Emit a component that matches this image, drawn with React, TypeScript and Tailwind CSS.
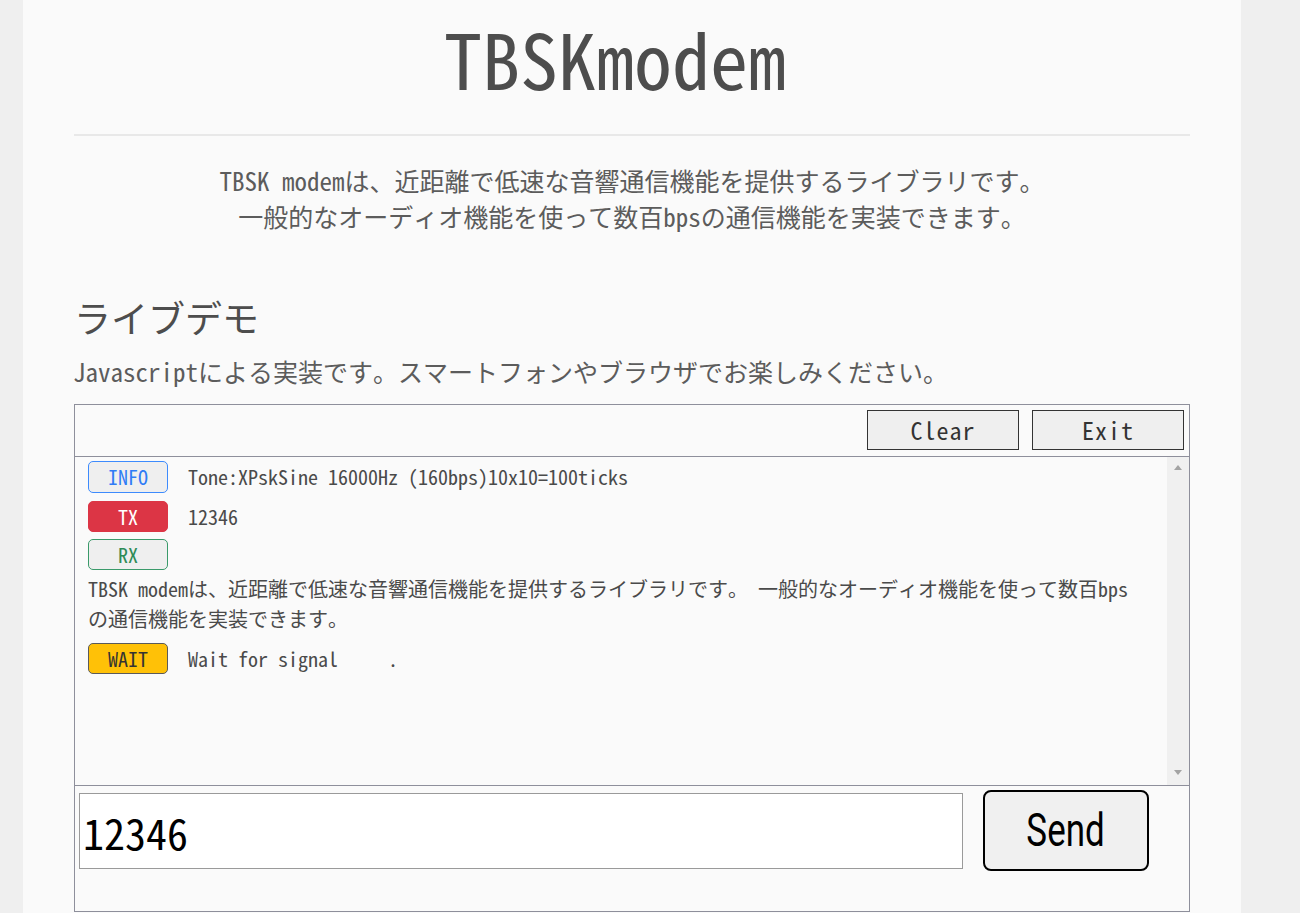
const mono = "font-['Noto_Sans_Mono_CJK_JP','Noto_Sans_CJK_JP',monospace]";

type BadgeKind = "info" | "tx" | "rx" | "wait";

const badgeStyles: Record<BadgeKind, string> = {
  info: "bg-[#efefef] border-[1.5px] border-[#3d8bfd] text-[#2f7cf6]",
  tx: "bg-[#dc3545] border-[1.5px] border-[#dc3545] text-white",
  rx: "bg-[#efefef] border-[1.5px] border-[#3a9a6a] text-[#2e8b57]",
  wait: "bg-[#ffc107] border-[1.5px] border-[#5a5a5a] text-[#333]",
};

function Badge({ kind, label }: { kind: BadgeKind; label: string }) {
  return (
    <span
      className={`flex h-full w-[80px] shrink-0 items-center justify-center rounded-[5px] text-[20px] leading-none ${badgeStyles[kind]}`}
    >
      {label}
    </span>
  );
}

function LogRow({ kind, label, text, className }: { kind: BadgeKind; label: string; text?: string; className: string }) {
  return (
    <div className={`flex items-center gap-[20px] ${className}`}>
      <Badge kind={kind} label={label} />
      {text && <span className="whitespace-pre">{text}</span>}
    </div>
  );
}

export default function App() {
  return (
    <div className={`h-[913px] overflow-hidden bg-[#efefef] text-[#5c5c5c] ${mono}`}>
      <main className="ml-[23px] min-h-full w-[1218px] bg-[#fafafa] px-[51px]">
        {/* Title */}
        <header className="border-b-2 border-[#e8e8e8] pb-[39px] pr-[34px] pt-[19px] text-center">
          <h1 className="text-[76px] leading-[76px] text-[#4d4d4d]">TBSKmodem</h1>
        </header>

        <p className="mt-[26px] text-center text-[25px] leading-[36px]">
          TBSK modemは、近距離で低速な音響通信機能を提供するライブラリです。
          <br />
          一般的なオーディオ機能を使って数百bpsの通信機能を実装できます。
        </p>

        <h2 className="mt-[59px] text-[37px] leading-[48px] text-[#4d4d4d]">ライブデモ</h2>
        <p className="-ml-[1px] mt-[12px] text-[25px] leading-[36px]">
          Javascriptによる実装です。スマートフォンやブラウザでお楽しみください。
        </p>

        {/* Demo panel */}
        <section className="mt-[15px] flex flex-col border border-[#8e8f9b]">
          <div className="flex h-[52px] items-start justify-end gap-[13px] border-b border-[#8e8f9b] pr-[5px] pt-[5px]">
            <button className="h-[40px] w-[152px] border border-[#333] bg-[#efefef] text-[24px] leading-none tracking-[1px] text-[#333]">
              Clear
            </button>
            <button className="h-[40px] w-[152px] border border-[#333] bg-[#efefef] text-[24px] leading-none tracking-[1px] text-[#333]">
              Exit
            </button>
          </div>

          {/* Log */}
          <div className="flex h-[329px] border-b border-[#8e8f9b]">
            <div className="flex-1 pl-[13px] pr-[22px] pt-[4px] text-[20px] text-[#4a4a4a]">
              <LogRow kind="info" label="INFO" text="Tone:XPskSine 16000Hz (160bps)10x10=100ticks" className="mb-[8px] h-[32px]" />
              <LogRow kind="tx" label="TX" text="12346" className="mb-[7px] h-[31px]" />
              <LogRow kind="rx" label="RX" className="mb-[4px] h-[31px]" />
              <p className="mb-[9px] leading-[30px]">
                TBSK modemは、近距離で低速な音響通信機能を提供するライブラリです。 一般的なオーディオ機能を使って数百bpsの通信機能を実装できます。
              </p>
              <LogRow kind="wait" label="WAIT" text="Wait for signal     ." className="h-[31px]" />
            </div>
            <div className="flex w-[22px] flex-col items-center justify-between bg-[#f0f0f0] pb-[10px] pt-[8px]">
              <span className="h-0 w-0 border-x-[4px] border-b-[5px] border-x-transparent border-b-[#a3a3a3]" />
              <span className="h-0 w-0 border-x-[4px] border-t-[5px] border-x-transparent border-t-[#a3a3a3]" />
            </div>
          </div>

          {/* Input */}
          <div className="flex h-[125px] items-start">
            <input
              defaultValue="12346"
              className="ml-[4px] mt-[7px] h-[76px] w-[884px] border border-[#9a9a9a] bg-white px-[3px] text-[42px] text-black outline-none"
            />
            <button className="ml-[20px] mt-[4px] h-[81px] w-[166px] rounded-[8px] border-2 border-black bg-[#f0f0f0] font-['Roboto',sans-serif] text-[46px] text-black">
              <span className="inline-block scale-x-[0.76]">Send</span>
            </button>
          </div>
        </section>
      </main>
    </div>
  );
}
